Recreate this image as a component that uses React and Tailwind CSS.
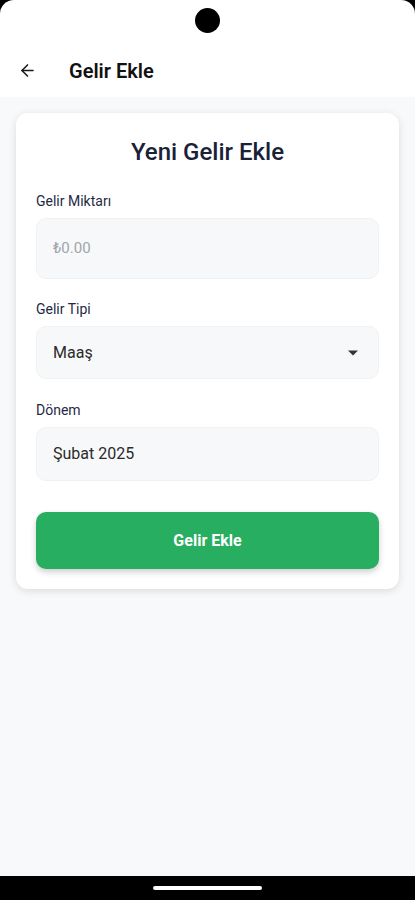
import { ArrowLeft } from 'lucide-react';

function Field({ label, children, className = '' }) {
  return (
    <div className={className}>
      <label className="block text-[14px] leading-4 font-normal text-[#1f2a44] mb-[9px]">{label}</label>
      {children}
    </div>
  );
}

export default function App() {
  return (
    <div className="w-[415px] h-[900px] bg-black flex flex-col font-['Roboto','Noto_Sans',sans-serif] overflow-hidden">
      {/* status bar */}
      <div className="h-[44px] bg-white rounded-t-[14px] flex justify-center pt-[8px]">
        <div className="w-[25px] h-[25px] rounded-full bg-black"></div>
      </div>

      {/* app bar */}
      <div className="h-[53px] bg-white flex items-center px-[18px]">
        <ArrowLeft size={19} strokeWidth={2} className="text-[#1a1a1a]" />
        <h1 className="ml-[32px] text-[20px] font-semibold text-[#111]">Gelir Ekle</h1>
      </div>

      {/* body */}
      <main className="flex-1 bg-[#f8f9fa] px-4 pt-[16px]">
        <div className="bg-white rounded-[12px] shadow-[0_2px_8px_rgba(0,0,0,0.12)] px-5 pt-[25px] pb-[20px]">
          <h2 className="text-center text-[24px] leading-7 font-medium text-[#1a2238]">Yeni Gelir Ekle</h2>

          <Field label="Gelir Miktarı" className="mt-[27px]">
            <div className="h-[61px] rounded-[10px] bg-[#f7f8f9] border border-[#f0f1f3] flex items-center px-4">
              <span className="text-[15px] text-[#a0a4ab]">₺0.00</span>
            </div>
          </Field>

          <Field label="Gelir Tipi" className="mt-[22px]">
            <div className="h-[53px] rounded-[10px] bg-[#f7f8f9] border border-[#f0f1f3] flex items-center justify-between pl-4 pr-[20px]">
              <span className="text-[16px] text-[#2b2b2b]">Maaş</span>
              <svg width="10" height="6" viewBox="0 0 10 5">
                <path d="M0 0h10L5 5z" fill="#333" />
              </svg>
            </div>
          </Field>

          <Field label="Dönem" className="mt-[23px]">
            <div className="h-[54px] rounded-[10px] bg-[#f7f8f9] border border-[#f0f1f3] flex items-center px-4">
              <span className="text-[16px] text-[#2b2b2b]">Şubat 2025</span>
            </div>
          </Field>

          <button className="mt-[31px] w-full h-[57px] rounded-[10px] bg-[#27ae60] shadow-[0_3px_6px_rgba(0,0,0,0.2)] text-white text-[16px] font-bold">
            Gelir Ekle
          </button>
        </div>
      </main>

      {/* nav bar */}
      <div className="h-[24px] bg-black flex justify-center pt-[10px]">
        <div className="w-[109px] h-[4px] rounded-full bg-white"></div>
      </div>
    </div>
  );
}
